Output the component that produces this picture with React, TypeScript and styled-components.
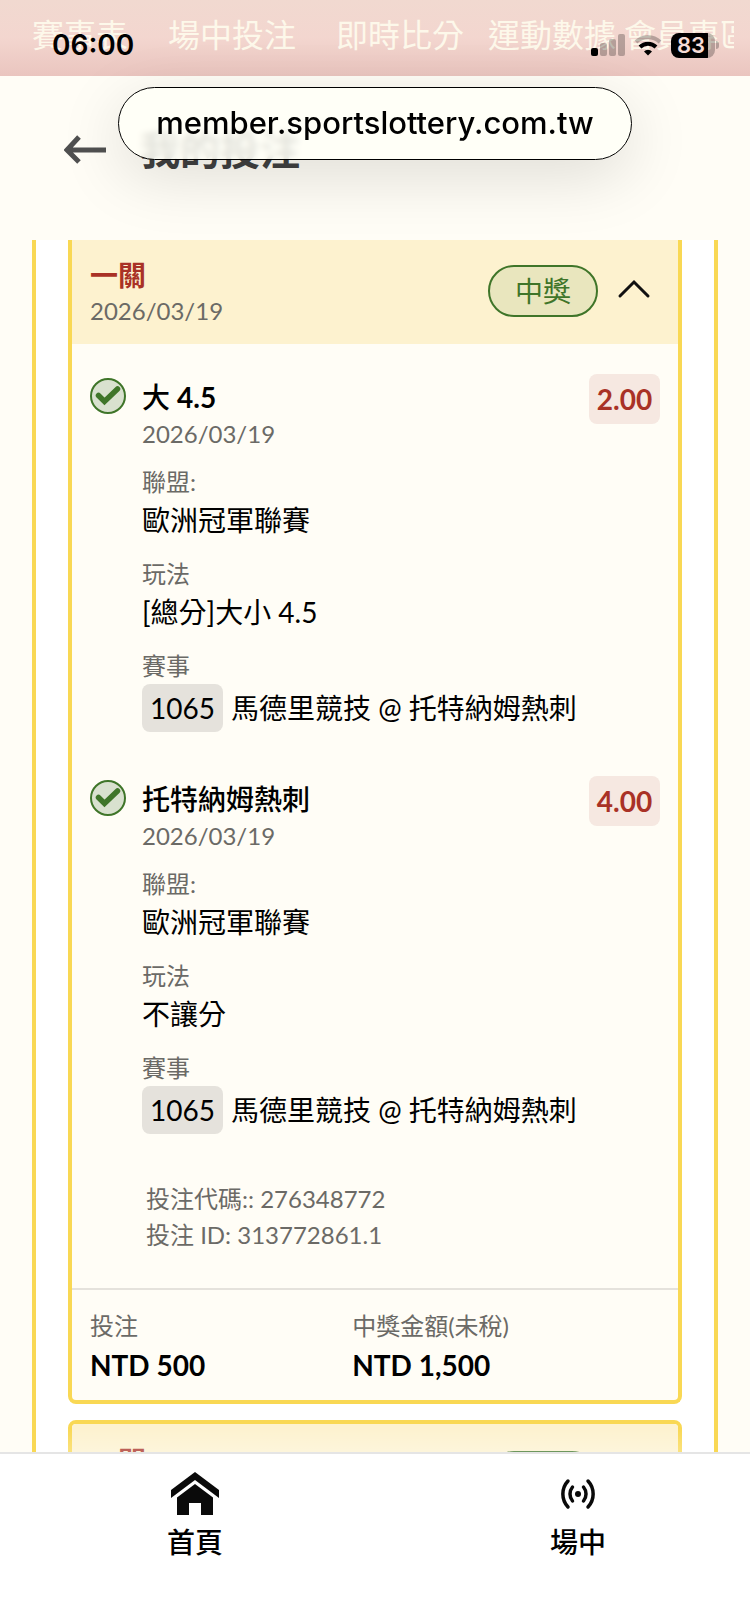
import React from 'react';
import type { ReactNode } from 'react';
import styled, { createGlobalStyle, css } from 'styled-components';

const GlobalStyle = createGlobalStyle`
  *, *::before, *::after { box-sizing: border-box; }
  body {
    margin: 0;
    background: #fffdf6;
    color: #000;
    font-family: Lato, "Noto Sans CJK TC", sans-serif;
    font-size: 28px;
    line-height: 40px;
  }
  h1, h2, h3, p, dl, dd, ul { margin: 0; padding: 0; font-weight: 400; }
`;

const Screen = styled.div`
  position: relative;
  display: flex;
  flex-direction: column;
  height: 100vh;
  min-height: 600px;
  overflow: hidden;
`;

const TopNav = styled.nav`
  display: flex;
  flex: none;
  align-items: center;
  height: 76px;
  padding: 0 16px 6px 32px;
  background: linear-gradient(#f1d9d0, #f3d6cf 50%, #eac5bf);
`;

const TopNavTrack = styled.div`
  display: flex;
  flex: 1;
  min-width: 0;
  overflow: hidden;
`;

const TopNavLink = styled.a<{ $gap: number }>`
  flex: none;
  margin-right: ${(p) => p.$gap}px;
  color: #fdf8ea;
  font-size: 32px;
  line-height: 40px;
  text-decoration: none;
`;

const StatusBar = styled.div`
  position: absolute;
  top: 30px;
  left: 0;
  right: 0;
  display: flex;
  align-items: center;
  justify-content: space-between;
  height: 30px;
  padding: 0 31px 0 52px;
  font-family: Inter, sans-serif;
`;

const Clock = styled.time`
  font-size: 28px;
  font-weight: 600;
  line-height: 30px;
`;

const StatusIcons = styled.div`
  display: flex;
  align-items: center;
  gap: 9px;
`;

const Battery = styled.div`
  display: flex;
  align-items: center;
  gap: 1px;
  &::after {
    content: '';
    width: 3px;
    height: 8px;
    border-radius: 0 4px 4px 0;
    background: rgba(0, 0, 0, 0.25);
  }
`;

const BatteryLevel = styled.span`
  width: 44px;
  height: 25px;
  padding-right: 4px;
  border-radius: 8px;
  background: linear-gradient(90deg, #000 84%, rgba(0, 0, 0, 0.25) 84%);
  color: #f6dcd6;
  font-size: 22px;
  font-weight: 600;
  line-height: 25px;
  text-align: center;
`;

const AddressPill = styled.div`
  position: absolute;
  top: 87px;
  left: 50%;
  width: 514px;
  height: 73px;
  transform: translateX(-50%);
  border: 1px solid #000;
  border-radius: 37px;
  background: rgba(255, 255, 247, 0.86);
  backdrop-filter: blur(3px);
  box-shadow: 0 16px 64px rgba(0, 0, 0, 0.13);
  font-family: Inter, sans-serif;
  font-size: 31px;
  font-weight: 500;
  line-height: 69px;
  text-align: center;
`;

const TitleBar = styled.header`
  display: flex;
  flex: none;
  align-items: center;
  gap: 34px;
  height: 164px;
  padding: 0 64px 16px;
`;

const BackButton = styled.button`
  display: flex;
  padding: 0;
  border: 0;
  background: none;
`;

const PageTitle = styled.h1`
  color: #404040;
  font-size: 40px;
  font-weight: 700;
  line-height: 56px;
`;

const Scroller = styled.main`
  position: relative;
  flex: 1;
  min-height: 0;
  margin: 0 32px;
  padding: 0 32px;
  overflow: hidden;
  border: solid #f9d854;
  border-width: 0 4px;
  background: #fff;
  &::after {
    content: '';
    position: absolute;
    inset: auto 0 0;
    height: 24px;
    background: linear-gradient(rgba(255, 255, 255, 0), rgba(255, 255, 255, 0.25));
  }
`;

const CardHeader = styled.header`
  display: flex;
  align-items: center;
  height: 106px;
  padding: 0 26px 0 18px;
  background: #fdf2cf;
`;

const Card = styled.article<{ $scrolled?: boolean }>`
  margin-bottom: 16px;
  overflow: hidden;
  border: 4px solid #f9d854;
  border-radius: 8px;
  background: #fffdf6;
  ${(p) =>
    p.$scrolled &&
    css`
      border-top: 0;
      border-radius: 0 0 8px 8px;
      ${CardHeader} {
        height: 104px;
        padding-bottom: 2px;
      }
    `}
`;

const CardHeading = styled.div`
  flex: 1;
  padding-top: 4px;
`;

const CardTitle = styled.h2`
  color: #a93226;
  font-size: 28px;
  font-weight: 700;
  line-height: 36px;
`;

const Muted = styled.p`
  color: #6b6a66;
  font-size: 24px;
  line-height: 36px;
`;

const Status = styled.span`
  width: 110px;
  height: 52px;
  border: 2px solid #3f7529;
  border-radius: 26px;
  background: #e9e6be;
  color: #3f7529;
  line-height: 48px;
  text-align: center;
`;

const ToggleButton = styled.button`
  display: flex;
  margin-left: 18px;
  padding: 0 0 4px;
  border: 0;
  background: none;
`;

const Bets = styled.ul`
  display: flex;
  flex-direction: column;
  gap: 44px;
  padding: 30px 18px 0;
  list-style: none;
`;

const Bet = styled.li`
  display: flex;
  align-items: flex-start;
`;

const BetMark = styled.svg`
  flex: none;
  margin: 4px 16px 0 0;
`;

const BetBody = styled.div`
  flex: 1;
  padding-top: 4px;
`;

const BetTitle = styled.h3`
  font-size: 28px;
  font-weight: 500;
  line-height: 38px;
`;

const Odds = styled.strong`
  min-width: 71px;
  border-radius: 8px;
  background: #f6e8e1;
  color: #a93226;
  line-height: 50px;
  text-align: center;
`;

const Facts = styled.dl`
  display: flex;
  flex-direction: column;
  gap: 16px;
  padding-top: 12px;
`;

const Term = styled.dt`
  color: #6b6a66;
  font-size: 24px;
  line-height: 36px;
`;

const Match = styled.dd`
  display: flex;
  align-items: center;
  gap: 8px;
  line-height: 48px;
`;

const MatchCode = styled.span`
  padding: 0 8px;
  border-radius: 8px;
  background: #e5e2dc;
`;

const BetIds = styled.div`
  padding: 47px 74px 35px;
`;

const CardFooter = styled.dl`
  display: grid;
  grid-template-columns: 46% 54%;
  padding: 18px 18px 14px;
  border-top: 2px solid #e5e2dc;
`;

const Amount = styled.dd`
  font-weight: 700;
  line-height: 42px;
`;

const BottomNav = styled.nav`
  display: grid;
  flex: none;
  grid-template-columns: 52% 1fr;
  column-gap: 16px;
  height: 172px;
  padding-top: 18px;
  border-top: 2px solid #e5e5e5;
  background: #fff;
`;

const BottomLink = styled.a`
  display: flex;
  flex-direction: column;
  align-items: center;
  gap: 6px;
  height: 96px;
  color: #000;
  font-weight: 500;
  text-decoration: none;
`;

const menu = [
  { label: '賽事表', gap: 40 },
  { label: '場中投注', gap: 40 },
  { label: '即時比分', gap: 24 },
  { label: '運動數據', gap: 8 },
  { label: '會員專區', gap: 0 },
];

type BetInfo = { id: number; pick: ReactNode; odds: string; play: string };

const bets: BetInfo[] = [
  { id: 1, pick: <>大 <b>4.5</b></>, odds: '2.00', play: '[總分]大小 4.5' },
  { id: 2, pick: '托特納姆熱刺', odds: '4.00', play: '不讓分' },
];

function CardTop() {
  return (
    <CardHeader>
      <CardHeading>
        <CardTitle>一關</CardTitle>
        <Muted>2026/03/19</Muted>
      </CardHeading>
      <Status>中獎</Status>
      <ToggleButton aria-label="收合">
        <svg width="36" height="24" viewBox="0 0 36 24" fill="none" stroke="#111" strokeWidth="3" strokeLinecap="round">
          <path d="M4 19 18 5l14 14" />
        </svg>
      </ToggleButton>
    </CardHeader>
  );
}

function BetItem({ pick, odds, play }: Omit<BetInfo, 'id'>) {
  return (
    <Bet>
      <BetMark width="36" height="36" viewBox="0 0 36 36" fill="none" stroke="#3f7529">
        <circle cx="18" cy="18" r="17" fill="#d9e1cf" strokeWidth="2" />
        <path d="m8.500 17.500 6 6L27.500 11" strokeWidth="5.500" strokeLinecap="round" />
      </BetMark>
      <BetBody>
        <BetTitle>{pick}</BetTitle>
        <Muted>2026/03/19</Muted>
        <Facts>
          <div>
            <Term>聯盟:</Term>
            <dd>歐洲冠軍聯賽</dd>
          </div>
          <div>
            <Term>玩法</Term>
            <dd>{play}</dd>
          </div>
          <div>
            <Term>賽事</Term>
            <Match>
              <MatchCode>1065</MatchCode>
              馬德里競技 @ 托特納姆熱刺
            </Match>
          </div>
        </Facts>
      </BetBody>
      <Odds>{odds}</Odds>
    </Bet>
  );
}

export default function App() {
  return (
    <>
      <GlobalStyle />
      <Screen>
        <TopNav>
          <TopNavTrack>
            {menu.map((m) => (
              <TopNavLink key={m.label} href="#" $gap={m.gap}>
                {m.label}
              </TopNavLink>
            ))}
          </TopNavTrack>
        </TopNav>
        <TitleBar>
          <BackButton aria-label="返回">
            <svg width="42" height="30" viewBox="0 0 42 30" fill="none" stroke="#505050" strokeWidth="5">
              <path d="M3 15h39M15 2 3 15l12 12" />
            </svg>
          </BackButton>
          <PageTitle>我的投注</PageTitle>
        </TitleBar>
        <Scroller>
          <Card $scrolled>
            <CardTop />
            <Bets>
              {bets.map(({ id, ...bet }) => (
                <BetItem key={id} {...bet} />
              ))}
            </Bets>
            <BetIds>
              <Muted>投注代碼:: 276348772</Muted>
              <Muted>投注 ID: 313772861.1</Muted>
            </BetIds>
            <CardFooter>
              <div>
                <Term>投注</Term>
                <Amount>NTD 500</Amount>
              </div>
              <div>
                <Term>中獎金額(未稅)</Term>
                <Amount>NTD 1,500</Amount>
              </div>
            </CardFooter>
          </Card>
          <Card>
            <CardTop />
          </Card>
        </Scroller>
        <BottomNav>
          <BottomLink href="#">
            <svg width="48" height="44" viewBox="0 0 48 44" fill="#0a0a0a">
              <path d="M24 0 48 18v8L24 8 0 26v-8z" />
              <path d="M24 12 42 25.500V43H30V31H18v12H6V25.500z" />
            </svg>
            首頁
          </BottomLink>
          <BottomLink href="#">
            <svg width="48" height="44" viewBox="0 0 48 44" fill="none" stroke="#0a0a0a" strokeWidth="3.500" strokeLinecap="round">
              <circle cx="24" cy="22" r="3" fill="#0a0a0a" stroke="none" />
              <path d="M18.500 15a11 11 0 0 0 0 14M29.500 15a11 11 0 0 1 0 14M14 9a19 19 0 0 0 0 26M34 9a19 19 0 0 1 0 26" />
            </svg>
            場中
          </BottomLink>
        </BottomNav>
        <StatusBar>
          <Clock>06:00</Clock>
          <StatusIcons>
            <svg width="34" height="22" viewBox="0 0 34 22" fillOpacity="0.25">
              <rect x="0" y="14" width="7" height="8" rx="2" fillOpacity="1" />
              <rect x="9" y="9" width="7" height="13" rx="2" />
              <rect x="18" y="5" width="7" height="17" rx="2" />
              <rect x="27" y="0" width="7" height="22" rx="2" />
            </svg>
            <svg width="28" height="22" viewBox="0 0 28 22" fill="none" stroke="#000" strokeWidth="4">
              <path d="M2 8a17.500 17.500 0 0 1 24 0" strokeOpacity="0.25" />
              <path d="M6 13a11.500 11.500 0 0 1 16 0" />
              <path d="m14 21.500-4-4a5.500 5.500 0 0 1 8 0z" fill="#000" stroke="none" />
            </svg>
            <Battery>
              <BatteryLevel>83</BatteryLevel>
            </Battery>
          </StatusIcons>
        </StatusBar>
        <AddressPill>member.sportslottery.com.tw</AddressPill>
      </Screen>
    </>
  );
}
